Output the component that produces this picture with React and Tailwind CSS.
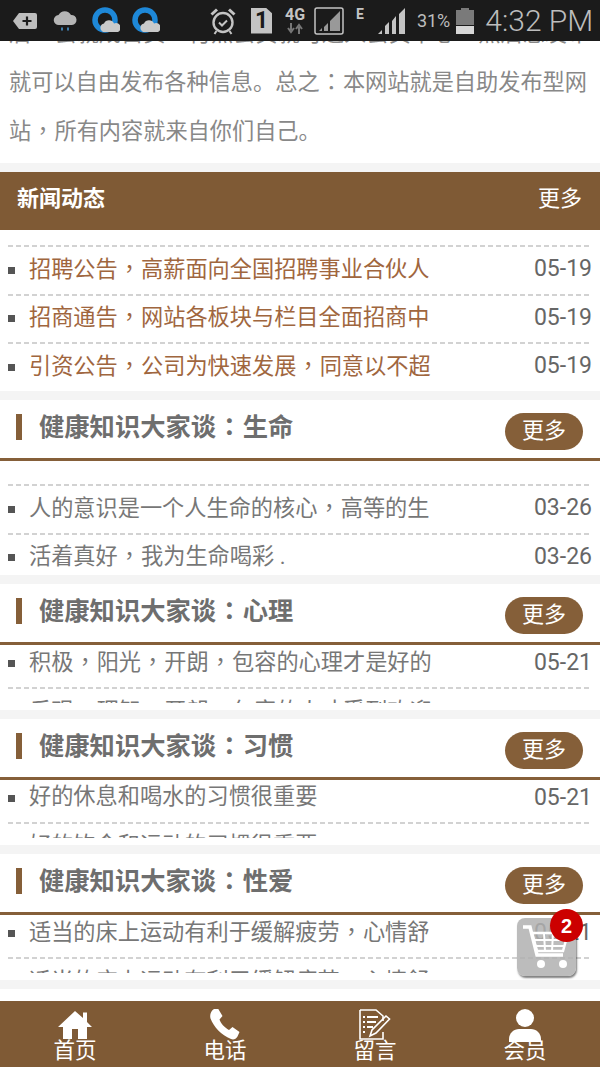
import React from "react";

const SANS = "font-['Roboto','Noto_Sans_CJK_SC',sans-serif]";
const DASH = "bg-[repeating-linear-gradient(90deg,#d2d2d2_0,#d2d2d2_5px,transparent_5px,transparent_8px)]";

function T({ children }) {
  const parts = String(children).split(/([，：])/);
  return (
    <>
      {parts.map((p, i) =>
        p === "，" || p === "：" ? (
          <span key={i} className="inline-block w-[1.05em] text-center font-['Noto_Sans_CJK_TC',sans-serif]">{p}</span>
        ) : (
          <React.Fragment key={i}>{p}</React.Fragment>
        )
      )}
    </>
  );
}

function Band() {
  return <div className="h-[9px] shrink-0 bg-[#f4f4f4]" />;
}

function Row({ text, date, link, first }) {
  return (
    <div className={`shrink-0 mx-[8px] ${first ? "h-[42px]" : "h-[48.5px]"}`}>
      {!first && <div className={`h-[2px] ${DASH}`} />}
      <div className={`flex items-center ${first ? "h-[42px] pb-[5px]" : "h-[46.5px]"}`}>
        <span className="w-[7px] h-[7px] bg-[#555555] shrink-0" />
        <span className={`ml-[14px] flex-1 whitespace-nowrap overflow-hidden text-[22.2px] leading-[30px] pb-[5px] ${link ? "text-[#a0663e]" : "text-[#777777]"}`}>
          <T>{text}</T>
        </span>
        {date && <span className="text-[23px] text-[#666666] leading-[30px] pb-[2px]">{date}</span>}
      </div>
    </div>
  );
}

function SectionHead({ title }) {
  return (
    <div className="h-[58px] shrink-0 flex items-center bg-white">
      <span className="ml-[16px] w-[6px] h-[26px] mb-[4px] bg-[#855f39]" />
      <span className="ml-[17px] text-[25.3px] font-bold leading-[34px] pb-[5px] text-[#6e6e6e] whitespace-nowrap"><T>{title}</T></span>
      <span className="ml-auto mr-[17px] mt-[5px] w-[78px] h-[37px] pb-[2px] rounded-full bg-[#855f39] text-white text-[22px] flex items-center justify-center">更多</span>
    </div>
  );
}

function Section({ title, rows, clipped }) {
  return (
    <>
      <SectionHead title={title} />
      <div className="h-[3px] shrink-0 bg-[#855f39]" />
      {clipped ? (
        <div className="h-[65px] shrink-0 bg-white">
          <div className="h-[58px] overflow-hidden">
            <Row first text={rows[0][0]} date={rows[0][1]} />
            <Row text={rows[1][0]} />
          </div>
        </div>
      ) : (
        <div className="h-[114px] shrink-0 overflow-hidden bg-white pt-[23px]">
          {rows.map((r, i) => (
            <Row key={i} text={r[0]} date={r[1]} />
          ))}
        </div>
      )}
    </>
  );
}

function StatusBar() {
  return (
    <div className="h-[41px] shrink-0 bg-[#1b1b1b] flex items-center text-[#c4c4c4] font-['Roboto',sans-serif]">
      <svg className="ml-[13px]" width="24" height="16" viewBox="0 0 24 16">
        <path d="M6 0H22a2 2 0 0 1 2 2V14a2 2 0 0 1-2 2H6L0 8Z" fill="#bdbdbd" />
        <path d="M14 3.500v9M9.500 8h9" stroke="#1b1b1b" strokeWidth="2.200" />
      </svg>
      <svg className="ml-[16px]" width="25" height="22" viewBox="0 0 25 22">
        <path d="M6 15a5 5 0 0 1-.5-10A7 7 0 0 1 18 5a5 5 0 0 1 1 10Z" fill="#b5b5b5" />
        <path d="M9 17.500v3M15 17.500v3" stroke="#4a9ad4" strokeWidth="1.600" />
      </svg>
      <svg className="ml-[14px]" width="28" height="28" viewBox="0 0 28 28">
        <circle cx="13" cy="13" r="10" fill="none" stroke="#1e88d8" strokeWidth="5.500" />
        <path d="M11 25a4.500 4.500 0 0 1 1-8.500a5.500 5.500 0 0 1 10 0a4.500 4.500 0 0 1 4 8.500Z" fill="#c9c9c9" />
      </svg>
      <svg className="ml-[12px]" width="28" height="28" viewBox="0 0 28 28">
        <circle cx="13" cy="13" r="10" fill="none" stroke="#1e88d8" strokeWidth="5.500" />
        <path d="M11 25a4.500 4.500 0 0 1 1-8.500a5.500 5.500 0 0 1 10 0a4.500 4.500 0 0 1 4 8.500Z" fill="#c9c9c9" />
      </svg>
      <svg className="ml-[50px]" width="26" height="28" viewBox="0 0 26 28" fill="none" stroke="#c4c4c4">
        <circle cx="13" cy="15.500" r="9.500" strokeWidth="2.400" />
        <path d="M9 15.500l3 3 5-5" strokeWidth="2" />
        <path d="M1.500 7.500L7 2.500M24.500 7.500L19 2.500" strokeWidth="3" />
        <path d="M6.500 24l-2 3M19.500 24l2 3" strokeWidth="2" />
      </svg>
      <span className="ml-[15px] w-[21px] h-[26px] bg-[#c4c4c4] flex items-center justify-center text-[#1b1b1b] text-[23px] font-bold leading-none [clip-path:polygon(0_0,70%_0,100%_22%,100%_100%,0_100%)]">1</span>
      <span className="ml-[12px] w-[22px] flex flex-col items-center">
        <span className="text-[16px] font-bold leading-[16px]">4G</span>
        <svg width="18" height="11" viewBox="0 0 18 11"><path d="M5 0v7M2 5l3 4 3-4" fill="none" stroke="#777" strokeWidth="2" /><path d="M13 11V4M10 6l3-4 3 4" fill="none" stroke="#777" strokeWidth="2" /></svg>
      </span>
      <svg className="ml-[8px]" width="30" height="28" viewBox="0 0 30 28">
        <rect x="1" y="1" width="28" height="26" rx="2" fill="none" stroke="#c4c4c4" strokeWidth="1.500" />
        <path d="M5 24h3v-3ZM10 24h4v-8l-4 4ZM16 24h10V4L16 14Z" fill="#c4c4c4" opacity="0.75" />
      </svg>
      <span className="ml-[12px] self-start mt-[6px] text-[14px] font-bold leading-[16px]">E</span>
      <svg className="ml-[14px]" width="28" height="28" viewBox="0 0 28 28" fill="#c4c4c4">
        <path d="M0 27l4-4v4ZM7 27v-8l4-4v12ZM14 27V14l4-5v18ZM21 27V7l6-6v26Z" />
      </svg>
      <span className="ml-[11px] text-[18px] leading-[22px] text-[#bdbdbd]">31%</span>
      <svg className="ml-[5px]" width="20" height="28" viewBox="0 0 20 28">
        <path d="M6 1h8v2h5v8H1V3h5Z" fill="#7a7a7a" />
        <rect x="1" y="10" width="18" height="8" fill="#7a7a7a" />
        <rect x="1" y="19" width="18" height="8" fill="#d6d6d6" />
      </svg>
      <span className="ml-[10px] text-[30px] leading-[34px] whitespace-nowrap text-[#bdbdbd] font-light">4:32 PM</span>
    </div>
  );
}

function NavItem({ label, children }) {
  return (
    <div className="flex-1 flex flex-col items-center pt-[9px]">
      <div className="h-[29px] flex items-center justify-center">{children}</div>
      <span className="text-[21.500px] leading-[26px] text-white -mt-[1px]">{label}</span>
    </div>
  );
}

export default function App() {
  return (
    <div className={`relative w-[600px] h-[1067px] overflow-hidden bg-white flex flex-col ${SANS}`}>
      <StatusBar />
      <div className="h-[122px] shrink-0 overflow-hidden flex flex-col justify-end pb-[8px] px-[9px] text-[22.2px] leading-[47px] text-[#888888] whitespace-nowrap">
        <div><T>后，会就成自贡，付点会员就可进入会员中心，然后您发布</T></div>
        <div><T>就可以自由发布各种信息。总之：本网站就是自助发布型网</T></div>
        <div><T>站，所有内容就来自你们自己。</T></div>
      </div>
      <Band />
      <div className="h-[58px] shrink-0 bg-[#7f5a35] flex items-center justify-between pl-[17px] pr-[18px] text-white">
        <span className="text-[22px] font-bold pb-[5px]">新闻动态</span>
        <span className="text-[22px] pb-[5px]">更多</span>
      </div>
      <div className="h-[161px] shrink-0 pt-[15px] overflow-hidden">
        <Row link text="招聘公告，高薪面向全国招聘事业合伙人" date="05-19" />
        <Row link text="招商通告，网站各板块与栏目全面招商中" date="05-19" />
        <Row link text="引资公告，公司为快速发展，同意以不超" date="05-19" />
      </div>
      <Band />
      <Section
        title="健康知识大家谈：生命"
        rows={[
          ["人的意识是一个人生命的核心，高等的生", "03-26"],
          ["活着真好，我为生命喝彩 .", "03-26"],
        ]}
      />
      <Band />
      <Section
        clipped
        title="健康知识大家谈：心理"
        rows={[
          ["积极，阳光，开朗，包容的心理才是好的", "05-21"],
          ["乐观，理智，开朗，包容的人才受到欢迎"],
        ]}
      />
      <Band />
      <Section
        clipped
        title="健康知识大家谈：习惯"
        rows={[
          ["好的休息和喝水的习惯很重要", "05-21"],
          ["好的饮食和运动的习惯很重要"],
        ]}
      />
      <Band />
      <Section
        clipped
        title="健康知识大家谈：性爱"
        rows={[
          ["适当的床上运动有利于缓解疲劳，心情舒", "05-21"],
          ["适当的床上运动有利于缓解疲劳，心情舒"],
        ]}
      />
      <Band />
      <div className="h-[12px] shrink-0 bg-white" />
      <div className="h-[67px] shrink-0 bg-[#7f5a35] flex">
        <NavItem label="首页">
          <svg width="34" height="28" viewBox="0 0 34 28" fill="#fff"><path d="M17 0L25 7V1.500h4V11L34 16h-5V28H20V18h-6V28H5V16H0Z" /></svg>
        </NavItem>
        <NavItem label="电话">
          <svg width="32" height="31" viewBox="0 0 32 31" fill="#fff"><path d="M5 0l4-.5 4.500 7.500-3 3.500c1 3.500 5 8 9.500 10.500l3.500-3 7 5-2 4.500c-1.500 2.500-4 3.500-6.500 2.500C12 26 5 18 1.500 9.500 .5 5.500 2 2 5 0Z" /></svg>
        </NavItem>
        <NavItem label="留言">
          <svg width="32" height="31" viewBox="0 0 32 31" fill="none" stroke="#fff" strokeWidth="1.600"><path d="M1 1h16l7 6v5M24 23v7H1V1" /><path d="M4 8h2M8 8h11M4 13h2M8 13h9M4 18h2M8 18h6M4 23h2" strokeWidth="2" /><path d="M11 27l2-6L27 7l3.500 3L17 24Z" strokeWidth="1.600" /></svg>
        </NavItem>
        <NavItem label="会员">
          <svg width="34" height="34" viewBox="0 0 34 34" fill="#fff"><circle cx="17" cy="10" r="9" /><path d="M1 34v-3c0-6 5-10 10-10h12c5 0 10 4 10 10v3Z" /></svg>
        </NavItem>
      </div>

      {/* floating cart */}
      <div className="absolute left-[517px] top-[918px] w-[59px] h-[58px] rounded-[8px] bg-[#b0b0b0]/85 shadow-[1px_2px_2px_rgba(0,0,0,0.5)] flex items-center justify-center">
        <svg width="50" height="50" viewBox="0 0 50 50" fill="none">
          <path d="M1 5h7l7 28h26" stroke="#fff" strokeWidth="3.500" />
          <path d="M10 11h36l-5 18H15Z" stroke="#fff" strokeWidth="2.500" />
          <path d="M12 18h31M14 24h28M22 11l1 18M31 11l-1 18" stroke="#fff" strokeWidth="2" />
          <circle cx="19" cy="42" r="4" fill="#fff" />
          <circle cx="41" cy="42" r="4" fill="#fff" />
        </svg>
      </div>
      <div className="absolute left-[550px] top-[909px] w-[33px] h-[33px] rounded-full bg-[#cc0000] text-white text-[20px] font-bold flex items-center justify-center font-['Liberation_Sans',sans-serif]">2</div>
    </div>
  );
}
